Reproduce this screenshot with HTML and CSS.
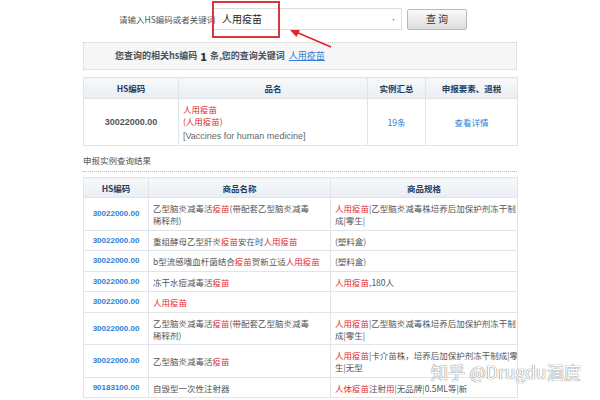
FILE: index.html
```html
<!DOCTYPE html>
<html>
<head>
<meta charset="utf-8">
<link rel="stylesheet" href="styles.css">
</head>
<body>
<div class="page">
  <div class="search">
    <span class="search-label">请输入HS编码或者关键词</span>
    <div class="search-input">
      <span class="search-value">人用疫苗</span>
      <span class="req">•</span>
    </div>
    <button class="search-btn">查 询</button>
    <div class="highlight"></div>
    <svg class="arrow" width="60" height="30" viewBox="0 0 60 30">
      <line x1="46" y1="21" x2="11" y2="6" stroke="#e0242c" stroke-width="1.6"/>
      <polygon points="5,4 15,4 11.5,11" fill="#e0242c"/>
    </svg>
  </div>

  <div class="summary">您查询的相关hs编码 <b class="count">1</b> 条,您的查询关键词 <a class="kw">人用疫苗</a></div>

  <table class="tbl t1">
    <colgroup><col style="width:95px"><col style="width:189px"><col style="width:58px"><col style="width:92px"></colgroup>
    <thead>
      <tr><th>HS编码</th><th>品名</th><th>实例汇总</th><th>申报要素、退税</th></tr>
    </thead>
    <tbody>
      <tr>
        <td class="code-plain">30022000.00</td>
        <td class="name">
          <div class="red">人用疫苗</div>
          <div class="red">(人用疫苗)</div>
          <div class="en">[Vaccines for human medicine]</div>
        </td>
        <td class="center link">19条</td>
        <td class="center link">查看详情</td>
      </tr>
    </tbody>
  </table>

  <div class="section-title">申报实例查询结果</div>

  <table class="tbl t2">
    <colgroup><col style="width:65px"><col style="width:182px"><col style="width:187px"></colgroup>
    <thead>
      <tr><th>HS编码</th><th>商品名称</th><th>商品规格</th></tr>
    </thead>
    <tbody>
      <tr>
        <td class="code">30022000.00</td>
        <td>乙型脑炎减毒活<span class="red">疫苗</span>(带配套乙型脑炎减毒<br>稀释剂)</td>
        <td><span class="red">人用疫苗</span>|乙型脑炎减毒株培养后加保护剂冻干制<br>成|零生|</td>
      </tr>
      <tr>
        <td class="code">30022000.00</td>
        <td>重组酵母乙型肝炎<span class="red">疫苗</span>安在时<span class="red">人用疫苗</span></td>
        <td>(塑料盒)</td>
      </tr>
      <tr>
        <td class="code">30022000.00</td>
        <td>b型流感嗜血杆菌结合<span class="red">疫苗</span>贺新立适<span class="red">人用疫苗</span></td>
        <td>(塑料盒)</td>
      </tr>
      <tr>
        <td class="code">30022000.00</td>
        <td>冻干水痘减毒活<span class="red">疫苗</span></td>
        <td><span class="red">人用疫苗</span>,180人</td>
      </tr>
      <tr>
        <td class="code">30022000.00</td>
        <td><span class="red">人用疫苗</span></td>
        <td></td>
      </tr>
      <tr>
        <td class="code">30022000.00</td>
        <td>乙型脑炎减毒活<span class="red">疫苗</span>(带配套乙型脑炎减毒<br>稀释剂)</td>
        <td><span class="red">人用疫苗</span>|乙型脑炎减毒株培养后加保护剂冻干制<br>成|零生|</td>
      </tr>
      <tr>
        <td class="code">30022000.00</td>
        <td>乙型脑炎减毒活<span class="red">疫苗</span></td>
        <td><span class="red">人用疫苗</span>|卡介苗株，培养后加保护剂冻干制成|零<br>生|无型</td>
      </tr>
      <tr>
        <td class="code">90183100.00</td>
        <td>自毁型一次性注射器</td>
        <td><span class="red">人体疫苗</span>注射<span class="red">用</span>|无品牌|0.5ML等|新</td>
      </tr>
    </tbody>
  </table>

  <div class="watermark">知乎 @Drugdu湎度</div>
</div>
</body>
</html>
```

FILE: styles.css
```css
html, body {
  margin: 0;
  padding: 0;
  background: #fff;
}
body {
  font-family: "Noto Sans CJK SC", "Liberation Sans", sans-serif;
  font-size: 8px;
  color: #555;
}
.page {
  width: 434px;
  margin-left: 83px;
  padding-top: 8px;
}
.search {
  display: flex;
  align-items: center;
  height: 22px;
  padding-left: 36px;
  position: relative;
}
.search-label {
  width: 93px;
  text-align: right;
  white-space: nowrap;
  color: #555;
  font-size: 8.5px;
  line-height: 12px;
}
.search-input {
  width: 189px;
  height: 22px;
  box-sizing: border-box;
  border: 1px solid #dcdcdc;
  display: flex;
  align-items: center;
  justify-content: space-between;
  padding: 0 4px 0 8px;
  margin-left: 1px;
}
.search-value {
  font-size: 10px;
  line-height: 14px;
  color: #222;
}
.req {
  color: #c44;
  font-size: 7px;
}
.search-btn {
  margin-left: 5px;
  width: 60px;
  height: 21px;
  border: 1px solid #b9b9b9;
  border-radius: 2px;
  background: linear-gradient(#fafafa, #dcdcdc);
  font-family: "Noto Sans CJK SC", sans-serif;
  font-size: 10px;
  line-height: 14px;
  color: #333;
  padding: 0;
}
.highlight {
  position: absolute;
  left: 129px;
  top: -7px;
  width: 68px;
  height: 37px;
  box-sizing: border-box;
  border: 2px solid #d9363e;
}
.arrow {
  position: absolute;
  left: 202px;
  top: 18px;
}
.summary {
  margin-top: 12px;
  height: 28px;
  box-sizing: border-box;
  border: 1px dotted #cfcfcf;
  background: #f6f6f6;
  padding-left: 31px;
  display: flex;
  align-items: center;
  font-weight: bold;
  color: #4a5560;
  font-size: 9px;
  line-height: 14px;
  white-space: nowrap;
}
.count {
  font-size: 11px;
  color: #333;
  margin: 0 3px;
}
.kw {
  color: #2f80d2;
  text-decoration: underline;
  font-weight: normal;
  margin-left: 4px;
}
.tbl {
  border-collapse: collapse;
  width: 434px;
  table-layout: fixed;
}
.tbl th, .tbl td {
  border: 1px solid #e1e5ea;
  line-height: 12px;
}
.tbl th {
  background: linear-gradient(#f7f9fb, #eaeef2);
  color: #25405f;
  font-weight: bold;
  font-size: 8.5px;
  height: 20px;
  padding: 0;
  text-align: center;
}
.t1 {
  margin-top: 7px;
}
.t1 td {
  height: 40px;
  padding: 0 4px;
}
.t1 .name {
  padding-top: 3px;
  padding-bottom: 3px;
  font-size: 8.5px;
}
.t1 .en {
  margin-top: 3px;
  color: #666;
  font-family: "Liberation Sans", sans-serif;
  font-size: 9px;
}
.code-plain {
  text-align: center;
  color: #555;
  font-weight: bold;
  font-family: "Liberation Sans", sans-serif;
  font-size: 9px;
}
.center {
  text-align: center;
}
.link {
  color: #2f80d2;
  font-size: 8.5px;
}
.red {
  color: #e3262c;
}
.section-title {
  margin-top: 8px;
  padding-bottom: 5px;
  border-bottom: 1px dotted #bbb;
  color: #555;
  font-size: 8.5px;
  line-height: 12px;
}
.t2 {
  margin-top: 5px;
}
.t2 th {
  height: 19px;
}
.t2 td {
  padding: 4px 4px 3.5px;
  vertical-align: middle;
  white-space: nowrap;
  overflow: hidden;
  font-size: 8.5px;
}
.t2 .code {
  text-align: center;
  color: #2f80d2;
  font-weight: bold;
  font-family: "Liberation Sans", sans-serif;
  font-size: 8px;
}
.watermark {
  position: absolute;
  left: 431px;
  top: 361px;
  font-family: "Noto Sans CJK SC", sans-serif;
  font-size: 17px;
  line-height: 22px;
  color: #fff;
  text-shadow: 0 0 1px #777, 0 0 1px #777;
  letter-spacing: 0.3px;
}
```
